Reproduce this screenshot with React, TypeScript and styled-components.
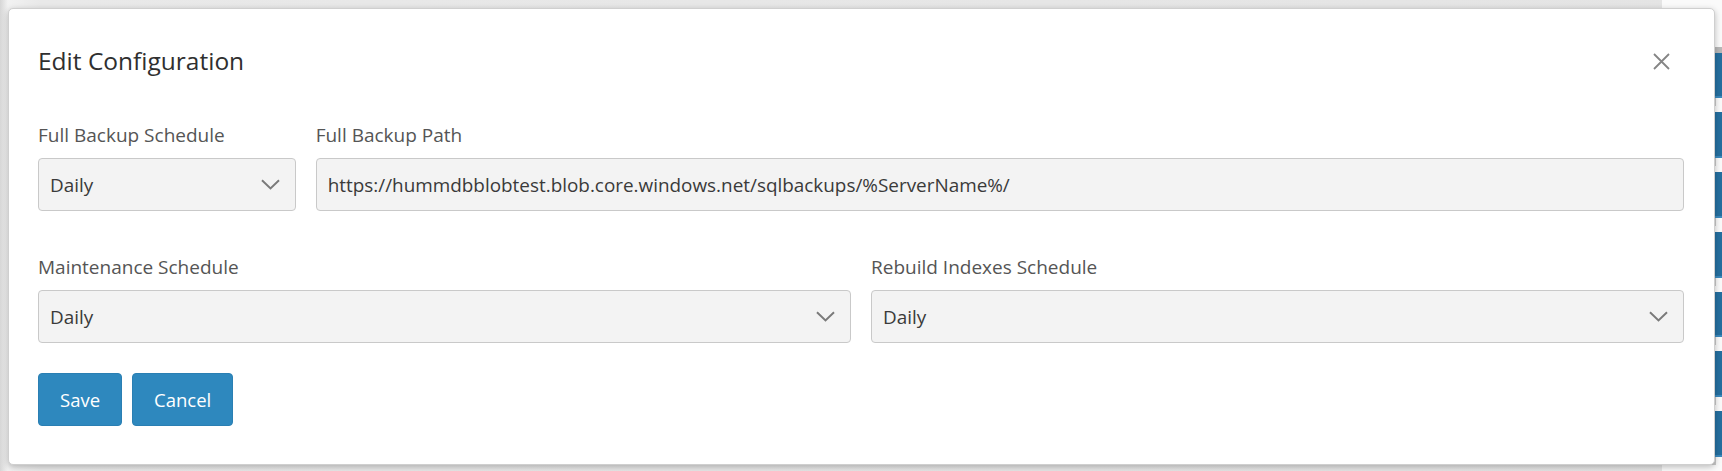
import { createGlobalStyle, styled } from 'styled-components'

const GlobalStyle = createGlobalStyle`
    html, body {
        margin: 0;
        padding: 0;
        overflow: hidden;
    }
    body {
        font-family: 'Open Sans', 'Noto Sans', sans-serif;
        color: #333;
    }
    * {
        box-sizing: border-box;
    }
`

const Screen = styled.div`
    position: relative;
    width: 1722px;
    height: 471px;
    overflow: hidden;
    background: linear-gradient(90deg, #d6d6d6 0px, #f2f2f2 8px, #e9e9e9 40px, #e4e4e4 100%);
`

// page behind the modal, only its right rail peeks out
const BehindPage = styled.div`
    display: flex;
    justify-content: flex-end;
    height: 100%;
`

const Rail = styled.div`
    width: 60px;
    display: flex;
    flex-direction: column;
    background: #fafafa;
`

const RailHead = styled.div`
    height: 54px;
    padding: 18px 0 0 6px;
    font: 13px 'Liberation Sans', sans-serif;
    color: #1d4f7a;
    border-bottom: 6px solid #b8b8b8;
`

const RailTile = styled.div`
    height: 48px;
    margin-bottom: 14px;
    background: #256f9f;
    border-bottom: 2px solid #3b89bd;
    box-shadow: 0 14px 0 -6px #c9c9c9;
`

const Dialog = styled.div`
    position: absolute;
    top: 8px;
    left: 8px;
    width: 1707px;
    height: 457px;
    background: #fff;
    border: 1px solid #cfcfcf;
    border-radius: 5px;
    box-shadow: 0 2px 6px rgba(0, 0, 0, 0.25);
    padding: 38px 30px 0 29px;
    display: flex;
    flex-direction: column;
`

const Header = styled.div`
    display: flex;
    align-items: center;
    justify-content: space-between;
    height: 28px;
`

const Title = styled.h4`
    margin: 0;
    font-size: 24.5px;
    line-height: 28px;
    font-weight: 500;
    color: #2f2f2f;
`

const CloseButton = styled.button`
    display: flex;
    align-items: center;
    justify-content: center;
    width: 24px;
    height: 24px;
    margin-right: 11px;
    padding: 0;
    border: 0;
    background: none;
    cursor: pointer;
`

const Row = styled.div<{ $top: number }>`
    display: grid;
    grid-template-columns: repeat(12, 1fr);
    column-gap: 20px;
    margin-top: ${(p) => p.$top}px;
`

const Field = styled.div<{ $span: number }>`
    grid-column: span ${(p) => p.$span};
    display: flex;
    flex-direction: column;
`

const Label = styled.label`
    font-size: 19px;
    line-height: 24px;
    color: #555;
    margin-bottom: 11px;
`

const Box = styled.div`
    height: 53px;
    display: flex;
    align-items: center;
    padding: 0 15px 0 11px;
    background: #f3f3f3;
    border: 1px solid #c9c9c9;
    border-radius: 4px;
    font-size: 18.9px;
    color: #3a3a3a;
    white-space: nowrap;
    overflow: hidden;
`

const BoxText = styled.span`
    flex: 1;
`

const Actions = styled.div`
    display: flex;
    gap: 10px;
    margin-top: 30px;
`

const Button = styled.button`
    height: 53px;
    padding: 0 21px;
    border: 1px solid #2a7fb3;
    border-radius: 4px;
    background: #2e88be;
    color: #fff;
    font-family: inherit;
    font-size: 18.5px;
    cursor: pointer;
`

const Chevron = () => (
    <svg width="19" height="11" viewBox="0 0 19 11" fill="none">
        <path d="M1 1.2 L9.5 9.4 L18 1.2" stroke="#7a7a7a" strokeWidth="2" />
    </svg>
)

const CloseIcon = () => (
    <svg width="17" height="17" viewBox="0 0 17 17" fill="none">
        <path d="M1 1 L16 16 M16 1 L1 16" stroke="#858585" strokeWidth="1.8" />
    </svg>
)

const SelectBox = ({ value }: { value: string }) => (
    <Box>
        <BoxText>{value}</BoxText>
        <Chevron />
    </Box>
)

export default function App() {
    return (
        <>
            <GlobalStyle />
            <Screen>
                <BehindPage>
                    <Rail>
                        <RailHead>.c</RailHead>
                        {Array.from({ length: 7 }).map((_, i) => (
                            <RailTile key={i} />
                        ))}
                    </Rail>
                </BehindPage>
                <Dialog>
                    <Header>
                        <Title>Edit Configuration</Title>
                        <CloseButton aria-label="Close">
                            <CloseIcon />
                        </CloseButton>
                    </Header>
                    <Row $top={48}>
                        <Field $span={2}>
                            <Label>Full Backup Schedule</Label>
                            <SelectBox value="Daily" />
                        </Field>
                        <Field $span={10}>
                            <Label>Full Backup Path</Label>
                            <Box>
                                <BoxText>https://hummdbblobtest.blob.core.windows.net/sqlbackups/%ServerName%/</BoxText>
                            </Box>
                        </Field>
                    </Row>
                    <Row $top={44}>
                        <Field $span={6}>
                            <Label>Maintenance Schedule</Label>
                            <SelectBox value="Daily" />
                        </Field>
                        <Field $span={6}>
                            <Label>Rebuild Indexes Schedule</Label>
                            <SelectBox value="Daily" />
                        </Field>
                    </Row>
                    <Actions>
                        <Button>Save</Button>
                        <Button>Cancel</Button>
                    </Actions>
                </Dialog>
            </Screen>
        </>
    )
}
